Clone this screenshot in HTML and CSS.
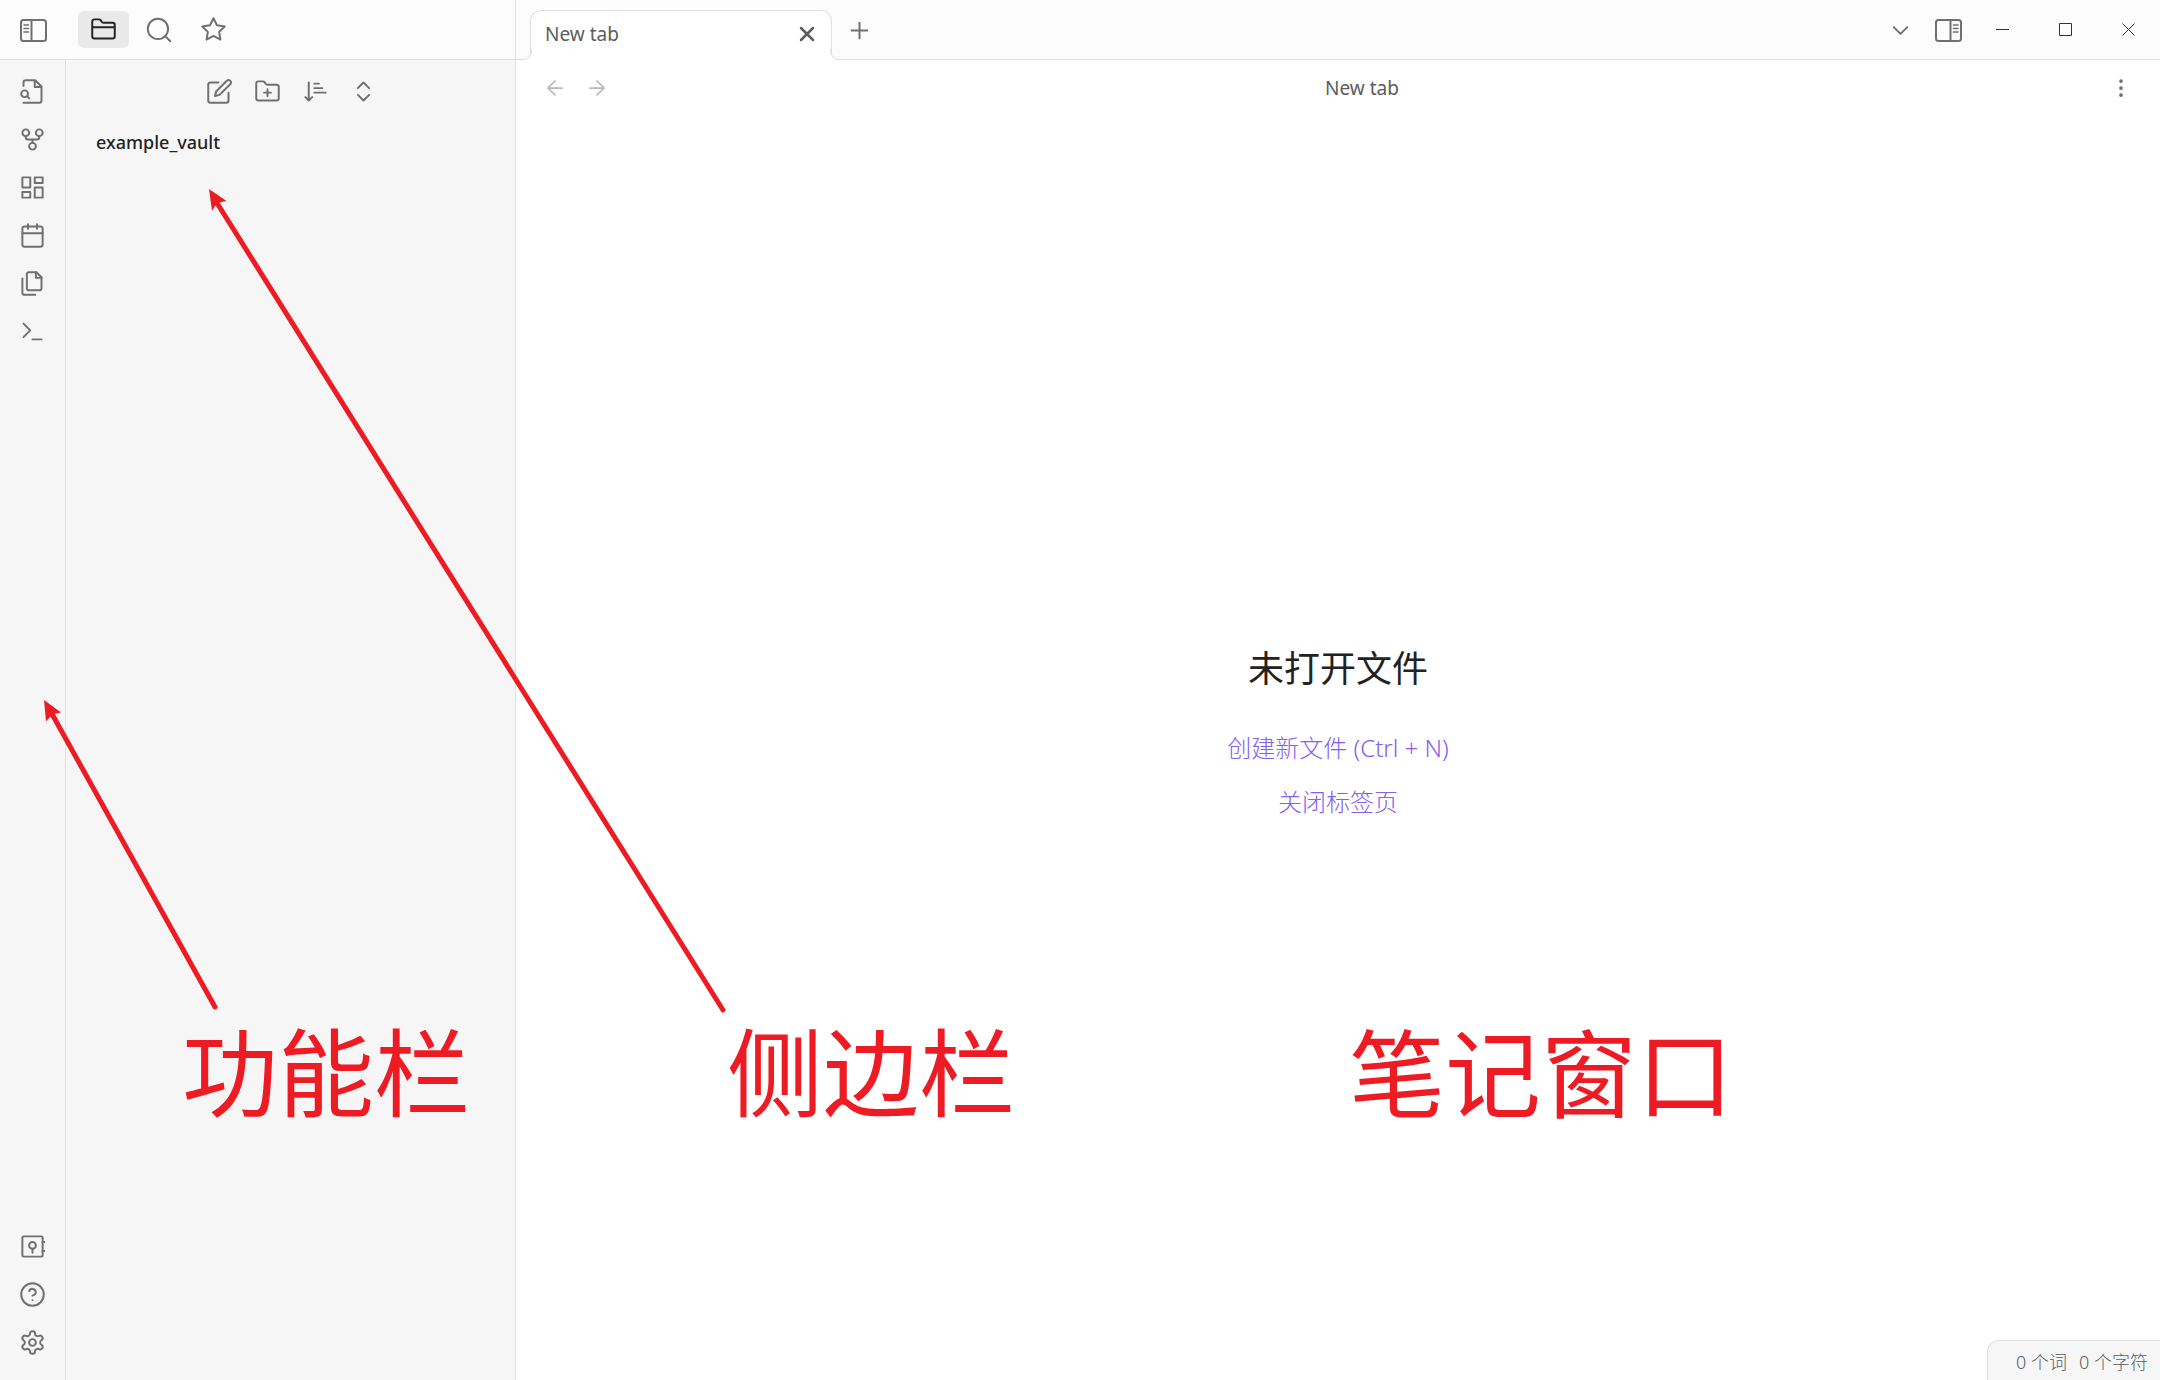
FILE: index.html
```html
<!DOCTYPE html>
<html lang="zh-CN">
<head>
<meta charset="utf-8">
<title>New tab - example_vault</title>
<link rel="stylesheet" href="styles.css">
</head>
<body>
<div class="app">
  <div class="left">
    <header class="left-header">
      <div class="toggle-slot">
        <button class="btn" aria-label="Toggle left sidebar">
          <svg class="toggle-icon" viewBox="0 0 27 23"><rect x="1" y="1" width="25" height="21" rx="2.5"/><path d="M11.5 1v21"/><path class="thin" d="M4 6h4.500M4 9.500h4.500M4 13h4.500"/></svg>
        </button>
      </div>
      <nav class="side-tabs">
        <button class="side-tab active" aria-label="Files"><svg class="icon" viewBox="0 0 24 24"><path d="M4 20h16a2 2 0 0 0 2-2V8a2 2 0 0 0-2-2h-7.930a2 2 0 0 1-1.660-.9l-.82-1.200A2 2 0 0 0 7.930 3H4a2 2 0 0 0-2 2v13c0 1.100.9 2 2 2zM2 10h20"/></svg></button>
        <button class="side-tab" aria-label="Search"><svg class="icon" viewBox="0 0 24 24"><circle cx="11.500" cy="11.500" r="9"/><path d="M22.500 22.500l-4.800-4.800"/></svg></button>
        <button class="side-tab" aria-label="Starred"><svg class="icon" viewBox="0 0 24 24"><path d="M12 2l3.090 6.260L22 9.270l-5 4.870 1.180 6.880L12 17.770l-6.180 3.250L7 14.140 2 9.270l6.910-1.010z"/></svg></button>
      </nav>
    </header>
    <div class="left-body">
      <aside class="ribbon">
        <div class="ribbon-group">
          <button class="ribbon-btn" aria-label="Quick switcher"><svg class="icon" viewBox="0 0 24 24"><path d="M4 22h14a2 2 0 0 0 2-2V7.500L14.500 2H6a2 2 0 0 0-2 2v3M14 2v6h6M9 18l-1.500-1.500"/><circle cx="5" cy="14" r="3"/></svg></button>
          <button class="ribbon-btn" aria-label="Graph view"><svg class="icon" viewBox="0 0 24 24"><circle cx="12" cy="18" r="3"/><circle cx="6" cy="6" r="3"/><circle cx="18" cy="6" r="3"/><path d="M18 9v1a2 2 0 0 1-2 2H8a2 2 0 0 1-2-2V9M12 12v3"/></svg></button>
          <button class="ribbon-btn" aria-label="Canvas"><svg class="icon" viewBox="0 0 24 24"><path d="M3 3h7v9H3zM14 3h7v5h-7zM14 12h7v9h-7zM3 16h7v5H3z"/></svg></button>
          <button class="ribbon-btn" aria-label="Daily note"><svg class="icon" viewBox="0 0 24 24"><rect x="3" y="4" width="18" height="18" rx="2"/><path d="M16 2v4M8 2v4M3 10h18"/></svg></button>
          <button class="ribbon-btn" aria-label="Insert template"><svg class="icon" viewBox="0 0 24 24"><path d="M15.500 2H8.600c-.4 0-.8.2-1.100.5-.3.3-.5.7-.5 1.100v12.800c0 .4.2.8.5 1.100.3.3.7.5 1.100.5h9.800c.4 0 .8-.2 1.100-.5.3-.3.5-.7.5-1.100V6.500L15.500 2z"/><path d="M3 7.600v12.800c0 .4.2.8.5 1.100.3.3.7.5 1.100.5h9.800M15 2v5h5"/></svg></button>
          <button class="ribbon-btn" aria-label="Command palette"><svg class="icon" viewBox="0 0 24 24"><path d="M4 17l6-6-6-6M12 19h8"/></svg></button>
        </div>
        <div class="ribbon-group">
          <button class="ribbon-btn" aria-label="Open another vault"><svg class="icon" viewBox="0 0 24 24"><rect x="3" y="3" width="18" height="18" rx="1"/><circle cx="12" cy="11" r="3"/><path d="M12 14v3.500M21 8h1.500M21 16h1.500"/></svg></button>
          <button class="ribbon-btn" aria-label="Help"><svg class="icon" viewBox="0 0 24 24"><circle cx="12" cy="12" r="10"/><path d="M9.090 9a3 3 0 0 1 5.830 1c0 2-3 3-3 3M12 17h.01"/></svg></button>
          <button class="ribbon-btn" aria-label="Settings"><svg class="icon" viewBox="0 0 24 24"><path d="M12.220 2h-.44a2 2 0 0 0-2 2v.18a2 2 0 0 1-1 1.730l-.43.25a2 2 0 0 1-2 0l-.15-.08a2 2 0 0 0-2.730.73l-.22.38a2 2 0 0 0 .73 2.730l.15.1a2 2 0 0 1 1 1.720v.51a2 2 0 0 1-1 1.740l-.15.09a2 2 0 0 0-.73 2.730l.22.38a2 2 0 0 0 2.730.73l.15-.08a2 2 0 0 1 2 0l.43.25a2 2 0 0 1 1 1.730V20a2 2 0 0 0 2 2h.44a2 2 0 0 0 2-2v-.18a2 2 0 0 1 1-1.730l.43-.25a2 2 0 0 1 2 0l.15.08a2 2 0 0 0 2.730-.73l.22-.39a2 2 0 0 0-.73-2.730l-.15-.08a2 2 0 0 1-1-1.740v-.5a2 2 0 0 1 1-1.740l.15-.09a2 2 0 0 0 .73-2.730l-.22-.38a2 2 0 0 0-2.730-.73l-.15.08a2 2 0 0 1-2 0l-.43-.25a2 2 0 0 1-1-1.730V4a2 2 0 0 0-2-2z"/><circle cx="12" cy="12" r="3"/></svg></button>
        </div>
      </aside>
      <section class="explorer">
        <div class="explorer-tools">
          <button class="ribbon-btn" aria-label="New note"><svg class="icon" viewBox="0 0 24 24"><path d="M11 4H4a2 2 0 0 0-2 2v14a2 2 0 0 0 2 2h14a2 2 0 0 0 2-2v-7"/><path d="M18.500 2.500a2.121 2.121 0 0 1 3 3L12 15l-4 1 1-4 9.500-9.500z"/></svg></button>
          <button class="ribbon-btn" aria-label="New folder"><svg class="icon" viewBox="0 0 24 24"><path d="M4 20h16a2 2 0 0 0 2-2V8a2 2 0 0 0-2-2h-7.930a2 2 0 0 1-1.660-.9l-.82-1.200A2 2 0 0 0 7.930 3H4a2 2 0 0 0-2 2v13c0 1.100.9 2 2 2zM12 10v6M9 13h6"/></svg></button>
          <button class="ribbon-btn" aria-label="Change sort order"><svg class="icon" viewBox="0 0 24 24"><path d="M11 5h4M11 9h7M11 13h10M3 17l3 3 3-3M6 19V4"/></svg></button>
          <button class="ribbon-btn" aria-label="Expand all"><svg class="icon" viewBox="0 0 24 24"><path d="M7 15l5 5 5-5M7 9l5-5 5 5"/></svg></button>
        </div>
        <h2 class="vault-name">example_vault</h2>
      </section>
    </div>
  </div>

  <main class="main">
    <header class="tab-bar">
      <div class="tab">
        <span class="tab-title">New tab</span>
        <button class="btn tab-close" aria-label="Close tab"><svg class="icon-small" viewBox="0 0 24 24"><path d="M18 6L6 18M6 6l12 12"/></svg></button>
      </div>
      <button class="btn new-tab" aria-label="New tab"><svg class="icon" viewBox="0 0 24 24"><path d="M12 5v14M5 12h14"/></svg></button>
      <div class="bar-tools">
        <button class="btn" aria-label="Tab list"><svg class="icon" viewBox="0 0 24 24"><path d="M6 9l6 6 6-6"/></svg></button>
        <button class="btn" aria-label="Toggle right sidebar"><svg class="toggle-icon" viewBox="0 0 27 23"><rect x="1" y="1" width="25" height="21" rx="2.500"/><path d="M15.500 1v21"/><path class="thin" d="M18.500 6H23M18.500 9.500H23M18.500 13H23"/></svg></button>
      </div>
      <div class="window-controls">
        <button class="window-btn" aria-label="Minimize"><svg class="window-icon" viewBox="0 0 13 13"><path d="M0 6.500h13"/></svg></button>
        <button class="window-btn" aria-label="Maximize"><svg class="window-icon" viewBox="0 0 13 13"><path d="M.5.5h12v12H.5z"/></svg></button>
        <button class="window-btn" aria-label="Close"><svg class="window-icon" viewBox="0 0 13 13"><path d="M.5.5l12 12M12.500.5l-12 12"/></svg></button>
      </div>
    </header>
    <div class="view-header">
      <div class="history">
        <button class="history-btn" aria-label="Back" disabled><svg class="icon-small" viewBox="0 0 24 24"><path d="M19 12H5M12 19l-7-7 7-7"/></svg></button>
        <button class="history-btn" aria-label="Forward" disabled><svg class="icon-small" viewBox="0 0 24 24"><path d="M5 12h14M12 5l7 7-7 7"/></svg></button>
      </div>
      <div class="view-title">New tab</div>
      <button class="btn" aria-label="More options"><svg class="icon-small" viewBox="0 0 24 24"><circle cx="12" cy="5" r="1"/><circle cx="12" cy="12" r="1"/><circle cx="12" cy="19" r="1"/></svg></button>
    </div>
    <div class="empty">
      <h1 class="empty-title">未打开文件</h1>
      <a class="empty-action" href="#new">创建新文件 (Ctrl + N)</a>
      <a class="empty-action" href="#close">关闭标签页</a>
    </div>
    <footer class="status"><span>0 个词</span><span>0 个字符</span></footer>
  </main>

  <svg class="arrows" width="800" height="1100" viewBox="0 0 800 1100">
    <path class="shaft" d="M52 714L215 1007M217 203L723 1010"/>
    <path class="head" d="M44 700L61 712.500 54 714 50 717 46 721.500zM209 189L226.500 201 219.500 202.500 215 206 212 211z"/>
  </svg>
  <div class="note note-ribbon">功能栏</div>
  <div class="note note-sidebar">侧边栏</div>
  <div class="note note-window">笔记窗口</div>
</div>
</body>
</html>
```

FILE: styles.css
```css
* {
  box-sizing: border-box;
}

body {
  margin: 0;
  font-family: "Noto Sans", "Noto Sans CJK SC", sans-serif;
  font-size: 19px;
  color: #5c5c5c;
  background: #fff;
}

button {
  display: flex;
  align-items: center;
  justify-content: center;
  padding: 0;
  border: 0;
  background: none;
  color: #707070;
  font: inherit;
}

svg {
  display: block;
  fill: none;
  stroke: currentColor;
  stroke-width: 1.75;
  stroke-linecap: round;
  stroke-linejoin: round;
}

.icon {
  width: 27px;
  height: 27px;
}

.icon-small {
  width: 24px;
  height: 24px;
}

.toggle-icon {
  width: 27px;
  height: 23px;
  stroke-width: 2;
}

.thin {
  stroke-width: 1.5;
}

.app {
  position: relative;
  display: flex;
  min-height: 100vh;
  overflow: hidden;
}

/* Left side: header, ribbon and file explorer */
.left {
  display: flex;
  flex-direction: column;
  flex: none;
  width: 516px;
  border-right: 1px solid #e0e0e0;
}

.left-header {
  display: flex;
  height: 60px;
  background: #fcfcfc;
  border-bottom: 1px solid #e0e0e0;
}

.toggle-slot {
  display: flex;
  align-items: center;
  justify-content: center;
  width: 66px;
  padding-top: 2px;
}

.side-tabs {
  display: flex;
  align-items: center;
  gap: 4px;
  padding-left: 12px;
}

.side-tab {
  width: 51px;
  height: 37px;
  border-radius: 6px;
}

.side-tab.active {
  background: #e9e9e9;
  color: #222;
}

.left-body {
  display: flex;
  flex: 1;
  background: #f6f6f6;
}

.ribbon {
  display: flex;
  flex-direction: column;
  justify-content: space-between;
  width: 66px;
  padding: 12px 0 19px;
  border-right: 1px solid #e0e0e0;
}

.ribbon-btn {
  width: 48px;
  height: 38px;
}

.ribbon-group {
  display: flex;
  flex-direction: column;
  align-items: center;
  gap: 10px;
}

.explorer {
  flex: 1;
  padding-top: 12px;
}

.explorer-tools {
  display: flex;
  justify-content: center;
  padding-left: 2px;
}

.vault-name {
  margin: 18px 0 0 30px;
  font-size: 18px;
  font-weight: 500;
  line-height: 28px;
  color: #222;
}

/* Main pane */
.main {
  display: flex;
  flex-direction: column;
  flex: 1;
  min-width: 0;
}

.tab-bar {
  display: flex;
  align-items: center;
  height: 60px;
  padding-left: 14px;
  background: #fcfcfc;
  border-bottom: 1px solid #e0e0e0;
}

.tab {
  position: relative;
  display: flex;
  align-items: center;
  justify-content: space-between;
  align-self: flex-end;
  width: 302px;
  height: 50px;
  margin-bottom: -1px;
  padding: 0 12px 4px 14px;
  background: #fff;
  border: 1px solid #e0e0e0;
  border-bottom: 0;
  border-radius: 11px 11px 0 0;
}

/* Flared feet that join the tab to the bar's bottom line */
.tab::before,
.tab::after {
  content: "";
  position: absolute;
  bottom: 0;
  width: 10px;
  height: 10px;
  border-bottom: 1px solid #e0e0e0;
}

.tab::before {
  left: -10px;
  border-right: 1px solid #e0e0e0;
  border-bottom-right-radius: 9px;
  box-shadow: 3px 3px 0 #fff;
}

.tab::after {
  right: -10px;
  border-left: 1px solid #e0e0e0;
  border-bottom-left-radius: 9px;
  box-shadow: -3px 3px 0 #fff;
}

.tab-close {
  color: #5c5c5c;
}

.tab-close .icon-small {
  stroke-width: 2.5;
}

.new-tab {
  margin-left: 14px;
  padding-top: 2px;
}

.bar-tools {
  display: flex;
  gap: 2px;
  margin-left: auto;
}

.bar-tools .btn {
  width: 46px;
  height: 36px;
  padding-top: 2px;
}

.window-controls {
  display: flex;
}

.window-btn {
  width: 63px;
  height: 58px;
  color: #333;
}

.window-icon {
  width: 13px;
  height: 13px;
  stroke-width: 1;
  stroke-linecap: butt;
  stroke-linejoin: miter;
}

.view-header {
  display: flex;
  align-items: center;
  height: 56px;
  padding: 0 27px 0 18px;
}

.history {
  display: flex;
  width: 93px;
}

.history-btn {
  width: 42px;
  height: 36px;
  color: #b8b8b8;
}

.view-title {
  flex: 1;
  padding-right: 12px;
  line-height: 28px;
  text-align: center;
}

.empty {
  display: flex;
  flex: 1;
  flex-direction: column;
  align-items: center;
  justify-content: center;
  padding-top: 24px;
}

.empty-title {
  margin: 0 0 34px;
  font-size: 36px;
  font-weight: 400;
  line-height: 54px;
  color: #222;
}

.empty-action {
  margin-bottom: 18px;
  font-size: 24px;
  font-weight: 300;
  line-height: 36px;
  color: #8460f0;
  text-decoration: none;
}

.status {
  display: flex;
  align-self: flex-end;
  align-items: center;
  gap: 12px;
  height: 40px;
  padding: 0 12px 0 28px;
  font-size: 18px;
  font-weight: 300;
  background: #f6f6f6;
  border: 1px solid #e0e0e0;
  border-right: 0;
  border-bottom: 0;
  border-top-left-radius: 12px;
}

/* Red callouts drawn over the window */
.arrows {
  position: absolute;
  top: 0;
  left: 0;
  pointer-events: none;
}

.shaft {
  stroke: #ed1c24;
  stroke-width: 5;
}

.head {
  fill: #ed1c24;
  stroke: none;
}

.note {
  position: absolute;
  font-family: "Noto Sans CJK SC", sans-serif;
  font-size: 96px;
  line-height: 96px;
  white-space: nowrap;
  color: #ed1c24;
}

.note-ribbon {
  top: 1020px;
  left: 182px;
}

.note-sidebar {
  top: 1020px;
  left: 727px;
}

.note-window {
  top: 1021px;
  left: 1349px;
}
```
